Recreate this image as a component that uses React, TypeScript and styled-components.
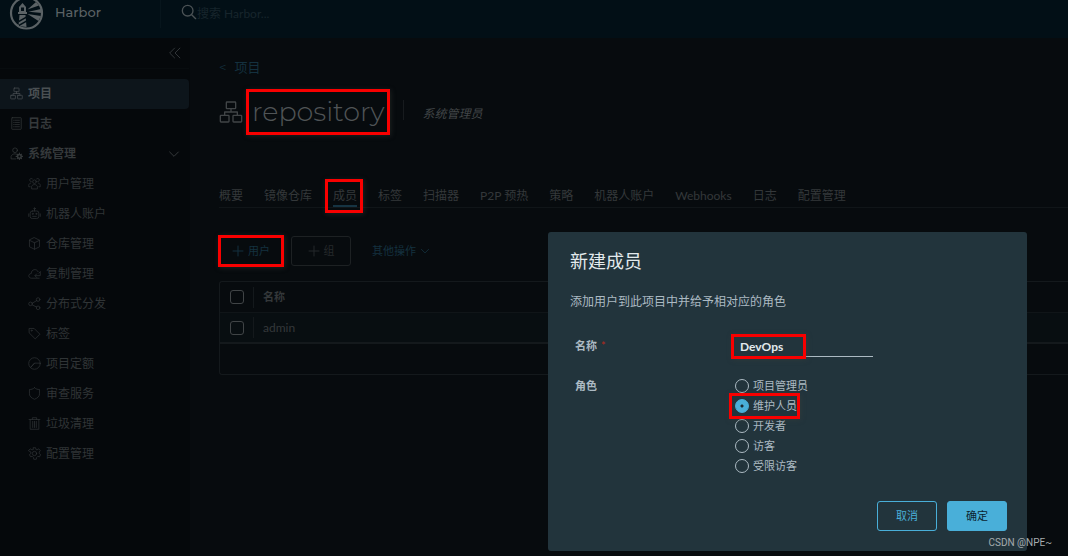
import React, { ReactNode } from "react";
import styled, { createGlobalStyle, css } from "styled-components";

const GlobalStyle = createGlobalStyle`
  * { box-sizing: border-box; }
  html, body, #root { height: 100%; }
  body {
    margin: 0;
    overflow: hidden;
    background: #070b0e;
    color: #34383a;
    font: 12px/20px Lato, "Noto Sans CJK SC", sans-serif;
  }
  button, input { font: inherit; color: inherit; }
  a { color: inherit; text-decoration: none; }
  h1, h2, p, ul { margin: 0; padding: 0; font-weight: 400; }
`;

const Page = styled.div`
  position: relative;
  display: flex;
  flex-direction: column;
  height: 100%;
  overflow: hidden;
  border-bottom: 1px solid #fff;
`;

const Header = styled.header`
  display: flex;
  flex: none;
  height: 38px;
  background: #020f16;
`;

const Brand = styled.a`
  display: flex;
  width: 160px;
  padding-left: 9px;
  gap: 11px;
  color: #5b6265;
  font: 500 13px/24px Montserrat, Inter, sans-serif;
  svg { flex: none; margin-top: -5px; }
`;

const Search = styled.label`
  display: flex;
  flex: 1;
  align-items: flex-start;
  height: 28px;
  padding: 4px 0 0 20px;
  border-left: 1px solid #07151c;
  color: #4a5154;
`;

const SearchInput = styled.input`
  width: 200px;
  height: 20px;
  padding: 0;
  border: 0;
  background: none;
  font-size: 12px;
  &::placeholder { color: #17252c; opacity: 1; }
`;

const Body = styled.div`
  display: flex;
  flex: 1;
  min-height: 0;
`;

const Sidebar = styled.nav`
  flex: none;
  width: 190px;
  padding-right: 1px;
  background: #05080b;
`;

const CollapseBar = styled.div`
  display: flex;
  justify-content: flex-end;
  height: 31px;
  margin-bottom: 10px;
  padding: 7px 6px 0 0;
  border-bottom: 1px solid #080c0f;
`;

const IconButton = styled.button`
  display: flex;
  height: 16px;
  padding: 0;
  border: 0;
  background: none;
  color: #363b3e;
`;

const NavLink = styled.a<{ $active?: boolean; $nested?: boolean }>`
  display: flex;
  align-items: center;
  height: 30px;
  gap: 5px;
  padding: 0 9px 0 ${(p) => (p.$nested ? 28 : 10)}px;
  border-radius: 0 4px 4px 0;
  color: ${(p) => (p.$active ? "#4a5053" : p.$nested ? "#303436" : "#35393b")};
  font-weight: ${(p) => (p.$nested ? 400 : 700)};
  ${(p) => p.$active && css`background: #0d151b;`}
  > svg { margin-bottom: 1px; }
  > span { flex: 1; }
`;

const Main = styled.main`
  flex: 1;
  min-width: 0;
  padding: 19px 0 0 29px;
`;

const Back = styled.a`
  display: flex;
  gap: 8px;
  color: #14313f;
  font: 13px/20px Montserrat, Inter, "Noto Sans CJK SC", sans-serif;
`;

const TitleRow = styled.div`
  display: flex;
  align-items: center;
  height: 46px;
  margin-top: 12px;
  color: #414547;
`;

const Title = styled.h1`
  position: relative;
  padding: 0 5px 0 6px;
  margin-left: 3px;
  color: #505456;
  font: 300 27px/46px Montserrat, Inter, sans-serif;
`;

const Role = styled.em`
  margin: 4px 0 0 13px;
  padding-left: 20px;
  position: relative;
  &::before {
    content: "";
    position: absolute;
    left: 0;
    top: -4px;
    height: 20px;
    border-left: 1px solid #171b1e;
  }
`;

const Tabs = styled.div`
  display: flex;
  gap: 21px;
  height: 28px;
  margin-top: 45px;
  border-bottom: 1px solid #101518;
`;

const Tab = styled.button<{ $active?: boolean }>`
  position: relative;
  flex: none;
  padding: 6px 0 1px;
  border: 0;
  background: none;
  white-space: nowrap;
  box-shadow: ${(p) => (p.$active ? "inset 0 -2px #163443" : "none")};
`;

const Marker = styled.span<{ $inset?: string }>`
  position: absolute;
  z-index: 2;
  inset: ${(p) => p.$inset ?? "0"};
  border: 3px solid #f80000;
  box-shadow: 1px 1px 5px rgba(60, 64, 60, 0.4);
  pointer-events: none;
`;

const Toolbar = styled.div`
  display: flex;
  gap: 8px;
  margin: 28px 0 15px;
`;

const ActionButton = styled.button<{ $kind: "primary" | "muted" | "text" }>`
  position: relative;
  display: flex;
  align-items: center;
  justify-content: center;
  gap: 4px;
  height: 30px;
  padding: 0 12px;
  min-width: ${(p) => (p.$kind === "primary" ? 64 : 60)}px;
  border: 1px solid ${(p) => (p.$kind === "primary" ? "#14313f" : p.$kind === "muted" ? "#1d2123" : "transparent")};
  border-radius: 3px;
  background: none;
  color: ${(p) => (p.$kind === "muted" ? "#25292b" : "#14313f")};
  font-size: 11px;
`;

const Grid = styled.table`
  width: 100%;
  border: 1px solid #14191c;
  border-right: 0;
  border-radius: 3px 0 0 3px;
  border-spacing: 0;
  th, td {
    height: 31px;
    padding: 0 10px;
    text-align: left;
    font-size: 11px;
    border-bottom: 1px solid #101518;
  }
  th { font-weight: 700; }
  tbody td { background: #080e11; border-bottom: 2px solid #14191c; }
  tbody td:last-child { font-size: 12px; }
  tfoot td { height: 30px; border: 0; }
`;

const SelectColumn = styled.col`
  width: 32px;
`;

const Divided = styled.div`
  display: flex;
  align-items: center;
  height: 21px;
  margin-left: -11px;
  padding-left: 9px;
  border-left: 1px solid #14191c;
`;

const Check = styled.input`
  display: block;
  appearance: none;
  width: 14px;
  height: 14px;
  margin: 0;
  border: 1px solid #404446;
  border-radius: 3px;
`;

const Modal = styled.form`
  position: absolute;
  z-index: 3;
  top: 232px;
  right: 41px;
  width: 479px;
  padding: 14px 20px 20px 22px;
  border-radius: 3px;
  background: #22343c;
  color: #acbac3;
`;

const ModalTitle = styled.h2`
  color: #e3eaed;
  font-size: 18px;
  line-height: 30px;
`;

const Description = styled.p`
  margin-top: 16px;
`;

const FieldRow = styled.div<{ $centered?: boolean }>`
  display: flex;
  align-items: ${(p) => (p.$centered ? "center" : "flex-start")};
  margin-top: ${(p) => (p.$centered ? 22 : 19)}px;
  padding-left: 5px;
`;

const FieldLabel = styled.label`
  flex: none;
  width: 157px;
  font-size: 11px;
  font-weight: 700;
  color: #acbac3;
`;

const Required = styled.span`
  margin-left: 4px;
  color: #b02a1c;
  font-weight: 400;
`;

const NameField = styled.div`
  position: relative;
  width: 142px;
  margin-left: -1px;
`;

const NameInput = styled.input`
  display: block;
  width: 100%;
  height: 23px;
  padding: 3px 9px 0;
  border: 0;
  border-bottom: 1px solid #acbac3;
  background: none;
  color: #e3eaed;
  font-weight: 700;
`;

const Radios = styled.div`
  display: flex;
  flex-direction: column;
  align-items: flex-start;
`;

const RadioLabel = styled.label`
  position: relative;
  display: flex;
  align-items: center;
  gap: 4px;
  height: 20px;
  padding-left: 3px;
  font-size: 11px;
`;

const Radio = styled.input`
  appearance: none;
  width: 14px;
  height: 14px;
  margin: 0;
  border: 1px solid #acbac3;
  border-radius: 50%;
  &:checked {
    border-color: #49afd9;
    background: radial-gradient(circle, #1b2a32 0 1px, #49afd9 2px);
  }
`;

const Footer = styled.div`
  display: flex;
  justify-content: flex-end;
  gap: 10px;
  margin-top: 25px;
`;

const ModalButton = styled.button<{ $solid?: boolean }>`
  width: 60px;
  height: 30px;
  padding: 0;
  border: 1px solid #49afd9;
  border-radius: 3px;
  background: ${(p) => (p.$solid ? "#49afd9" : "transparent")};
  color: ${(p) => (p.$solid ? "#0c2430" : "#49afd9")};
  font-size: 11px;
`;

const Credit = styled.span`
  position: absolute;
  z-index: 4;
  right: 16px;
  bottom: 4px;
  color: #a5abae;
  font: 10px/18px Roboto, sans-serif;
`;

const Icon = ({ size = 14, w = 2, children }: { size?: number; w?: number; children: ReactNode }) => (
  <svg width={size} height={size} viewBox="0 0 36 36" fill="none" stroke="currentColor" strokeWidth={w} strokeLinejoin="round" strokeLinecap="round" aria-hidden="true">
    {children}
  </svg>
);

const orgShapes = (
  <>
    <rect x="11" y="3" width="14" height="10" rx="1" />
    <rect x="2" y="23" width="13" height="10" rx="1" />
    <rect x="21" y="23" width="13" height="10" rx="1" />
    <path d="M18 13v5M8.500 23v-5h19v5" />
  </>
);

const shapes: Record<string, ReactNode> = {
  org: orgShapes,
  log: <><rect x="5" y="2" width="26" height="32" rx="1" /><path d="M10 9h2M15 9h11M10 15h2M15 15h11M10 21h2M15 21h11M10 27h2M15 27h11" /></>,
  admin: <><circle cx="14" cy="9" r="6.500" /><path d="M16 33H3v-7c2-5 6-7 11-7l4 1" /><circle cx="26" cy="26" r="5" strokeWidth="4" /><path d="M26 17v3M26 32v3M17 26h3M32 26h3M20 20l2 2M30 30l2 2M32 20l-2 2M22 30l-2 2" strokeWidth="3" /></>,
  users: <><circle cx="18" cy="13" r="5" /><path d="M10 32v-6c2-4 5-5 8-5s6 1 8 5v6zM12 5a4.500 4.500 0 1 0-3 8M24 5a4.500 4.500 0 1 1 3 8M7 17c-3 1-5 3-5 6v4h4M29 17c3 1 5 3 5 6v4h-4" /></>,
  robot: <><rect x="6" y="11" width="24" height="21" rx="6" /><path d="M18 11V5M2 19v7M34 19v7M13 26h10" /><circle cx="18" cy="4" r="2" /><circle cx="13" cy="19" r="1.500" /><circle cx="23" cy="19" r="1.500" /></>,
  cube: <path d="M18 2l14 7v18l-14 7-14-7V9zM4 9l14 7 14-7M18 16v18" />,
  cloud: <><path d="M31 31H9c-9-1-9-12 0-13 0-12 15-15 19-5" /><path d="M34 14v10H20M24 19l-5 5 5 5M30 17l4-4" /></>,
  share: <><circle cx="7" cy="19" r="5" /><circle cx="28" cy="7" r="5" /><circle cx="28" cy="30" r="5" /><path d="M12 17l12-7M12 22l12 6" /></>,
  tag: <><path d="M4 4h13l16 16-13 13L4 17z" /><circle cx="10" cy="10" r="1.500" /></>,
  quota: <><circle cx="18" cy="18" r="16" /><path d="M7 29l11-12h15M18 17l-9 10" /></>,
  shield: <path d="M18 2c4 4 9 5 14 5v12c0 8-7 12-14 15C11 31 4 27 4 19V7c5 0 10-1 14-5z" />,
  trash: <path d="M3 7h30M12 7V2h12v5M6 7v27h24V7M13 12v17M18 12v17M23 12v17" />,
  gear: <><circle cx="18" cy="18" r="6" /><path d="M15 2h6l1 5 3 1 5-3 4 5-3 4v4l4 3-3 6-5-1-3 3-1 5h-7l-1-5-3-3-5 1-3-6 4-3v-4L1 10l5-5 5 3 3-1z" /></>,
};

const Chevron = ({ size = 12 }: { size?: number }) => <Icon size={size} w={3}><path d="M5 12l13 13 13-13" /></Icon>;
const Plus = () => <Icon size={12} w={3}><path d="M18 3v30M3 18h30" /></Icon>;

const Logo = () => (
  <svg width="35" height="35" viewBox="0 0 35 35" aria-hidden="true">
    <circle cx="17.500" cy="18" r="15.500" fill="none" stroke="#5b6265" strokeWidth="2.200" />
    <g fill="#5b6265">
      <path d="M10 12l3.500-4 3.500 4v5h1v2H9v-2h1zM10.500 20h6l1 12-8-1z" />
      <path d="M18.500 14.500L27 7l3 3.500zM19.500 16.800L32 14l1 4zM18.500 19L32 21l-2.500 5z" />
    </g>
    <path d="M12 12.500h3v3.500h-3zM10 25.500l7-4v1.800l-7 4zM10 29.500l7-4v1.800l-7 4z" fill="#020f16" />
  </svg>
);

const nested: [string, string][] = [
  ["users", "用户管理"],
  ["robot", "机器人账户"],
  ["cube", "仓库管理"],
  ["cloud", "复制管理"],
  ["share", "分布式分发"],
  ["tag", "标签"],
  ["quota", "项目定额"],
  ["shield", "审查服务"],
  ["trash", "垃圾清理"],
  ["gear", "配置管理"],
];

const tabs = ["概要", "镜像仓库", "成员", "标签", "扫描器", "P2P 预热", "策略", "机器人账户", "Webhooks", "日志", "配置管理"];
const roles = ["项目管理员", "维护人员", "开发者", "访客", "受限访客"];

export default function App() {
  return (
    <Page>
      <GlobalStyle />
      <Header>
        <Brand href="#"><Logo />Harbor</Brand>
        <Search>
          <Icon size={16} w={3}><circle cx="15" cy="15" r="12" /><path d="M24 24l9 9" /></Icon>
          <SearchInput placeholder="搜索 Harbor..." aria-label="搜索 Harbor" />
        </Search>
      </Header>
      <Body>
        <Sidebar>
          <CollapseBar>
            <IconButton aria-label="收起"><Icon size={16} w={2}><path d="M17 7L6 18l11 11M29 7L18 18l11 11" /></Icon></IconButton>
          </CollapseBar>
          <NavLink href="#" $active><Icon size={13}>{shapes.org}</Icon><span>项目</span></NavLink>
          <NavLink href="#"><Icon size={13}>{shapes.log}</Icon><span>日志</span></NavLink>
          <NavLink href="#"><Icon size={13}>{shapes.admin}</Icon><span>系统管理</span><Chevron /></NavLink>
          {nested.map(([icon, label]) => (
            <NavLink href="#" key={label} $nested><Icon size={13}>{shapes[icon]}</Icon><span>{label}</span></NavLink>
          ))}
        </Sidebar>
        <Main>
          <Back href="#"><span>&lt;</span>项目</Back>
          <TitleRow>
            <Icon size={24}>{orgShapes}</Icon>
            <Title>repository<Marker /></Title>
            <Role>系统管理员</Role>
          </TitleRow>
          <Tabs role="tablist">
            {tabs.map((t) => (
              <Tab key={t} role="tab" $active={t === "成员"} aria-selected={t === "成员"}>
                {t}
                {t === "成员" && <Marker $inset="-1px -6px -6px -8px" />}
              </Tab>
            ))}
          </Tabs>
          <Toolbar>
            <ActionButton $kind="primary"><Plus />用户<Marker $inset="-2px" /></ActionButton>
            <ActionButton $kind="muted"><Plus />组</ActionButton>
            <ActionButton $kind="text">其他操作<Chevron size={10} /></ActionButton>
          </Toolbar>
          <Grid>
            <colgroup><SelectColumn /><col /></colgroup>
            <thead>
              <tr><th><Check type="checkbox" aria-label="全选" /></th><th><Divided>名称</Divided></th></tr>
            </thead>
            <tbody>
              <tr><td><Check type="checkbox" aria-label="admin" /></td><td><Divided>admin</Divided></td></tr>
            </tbody>
            <tfoot><tr><td colSpan={2} /></tr></tfoot>
          </Grid>
        </Main>
      </Body>
      <Modal role="dialog" aria-labelledby="member-title">
        <ModalTitle id="member-title">新建成员</ModalTitle>
        <Description>添加用户到此项目中并给予相对应的角色</Description>
        <FieldRow $centered>
          <FieldLabel htmlFor="member-name">名称<Required>*</Required></FieldLabel>
          <NameField>
            <NameInput id="member-name" defaultValue="DevOps" />
            <Marker $inset="0 67px -2px 0" />
          </NameField>
        </FieldRow>
        <FieldRow>
          <FieldLabel as="span" id="role-label">角色</FieldLabel>
          <Radios role="radiogroup" aria-labelledby="role-label">
            {roles.map((r) => (
              <RadioLabel key={r}>
                <Radio type="radio" name="role" defaultChecked={r === "维护人员"} />
                {r}
                {r === "维护人员" && <Marker $inset="-3px" />}
              </RadioLabel>
            ))}
          </Radios>
        </FieldRow>
        <Footer>
          <ModalButton type="button">取消</ModalButton>
          <ModalButton type="submit" $solid>确定</ModalButton>
        </Footer>
      </Modal>
      <Credit>CSDN @NPE~</Credit>
    </Page>
  );
}
